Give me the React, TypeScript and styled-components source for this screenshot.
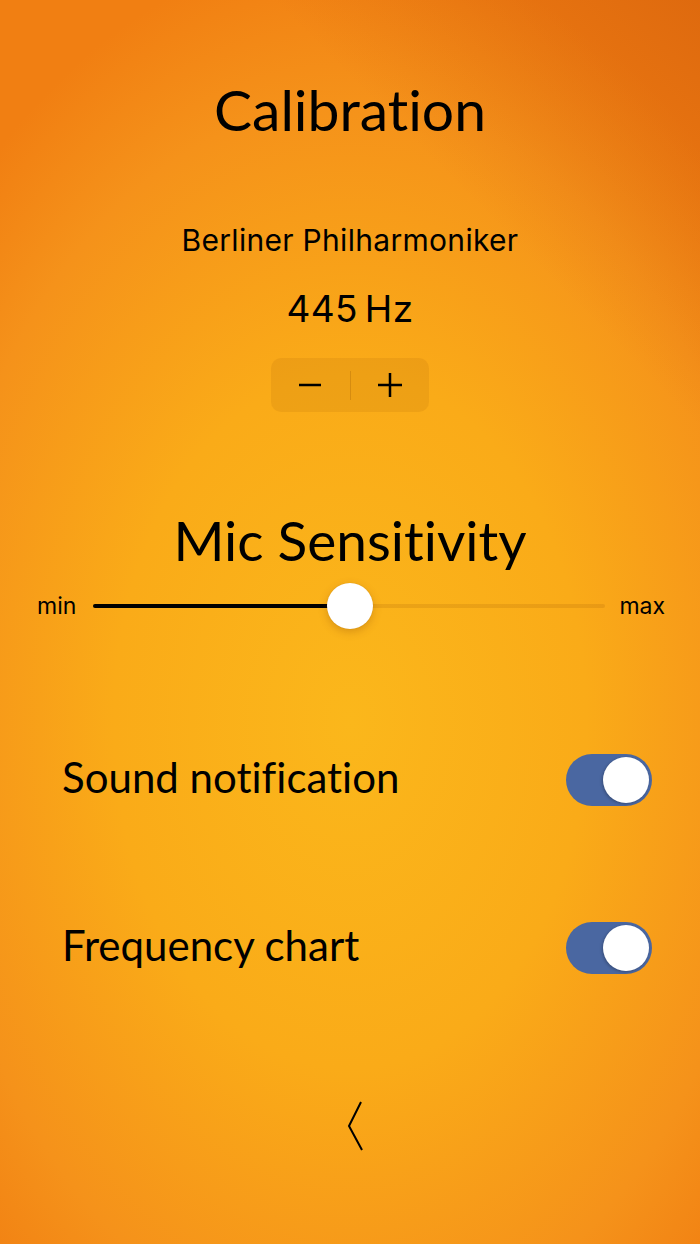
import React, { useState } from "react";
import styled, { createGlobalStyle } from "styled-components";

const GlobalStyle = createGlobalStyle`
    html, body {
        margin: 0;
        padding: 0;
    }
    body {
        font-family: "Lato", "Noto Sans", sans-serif;
        font-variant-ligatures: none;
        color: #000;
    }
`;

const Page = styled.div`
    min-height: 100vh;
    display: flex;
    flex-direction: column;
    align-items: center;
    background:
        linear-gradient(225deg, rgba(200, 80, 10, 0.45) 0%, rgba(200, 80, 10, 0) 22%),
        radial-gradient(ellipse 75% 62% at 50% 58%, #fbb71b 0%, #faab18 45%, #f5921a 80%, #f17f12 100%);
`;

const Title = styled.h1<{ $top: number; $size: number }>`
    margin: ${(p) => p.$top}px 0 0;
    font-family: "Lato", sans-serif;
    font-weight: 400;
    font-size: ${(p) => p.$size}px;
    line-height: 64px;
`;

const Preset = styled.div`
    margin-top: 82px;
    font-family: "Inter", "Noto Sans", sans-serif;
    font-size: 30px;
    line-height: 34px;
    letter-spacing: 0.3px;
`;

const Freq = styled.div`
    margin-top: 31px;
    font-family: "Inter", "Noto Sans", sans-serif;
    font-size: 37px;
    line-height: 42px;
    letter-spacing: 0.3px;
`;

const Stepper = styled.div`
    margin-top: 28px;
    width: 158px;
    height: 54px;
    border-radius: 10px;
    background: rgba(140, 70, 0, 0.1);
    display: flex;
    align-items: center;
`;

const StepButton = styled.button`
    flex: 1;
    height: 100%;
    border: 0;
    background: transparent;
    display: flex;
    align-items: center;
    justify-content: center;
    padding: 0;
    cursor: pointer;
`;

const StepDivider = styled.div`
    width: 1px;
    height: 29px;
    background: rgba(120, 60, 0, 0.2);
`;

const SliderRow = styled.div`
    margin-top: 11px;
    align-self: stretch;
    display: flex;
    align-items: center;
    padding: 0 35px 0 37px;
    height: 46px;
`;

const SliderLabel = styled.span`
    font-family: "Inter", "Noto Sans", sans-serif;
    font-size: 23px;
    line-height: 28px;
`;

const Track = styled.div`
    position: relative;
    flex: 1;
    height: 4px;
    margin: 0 14px 0 17px;
    border-radius: 2px;
    background: rgba(140, 70, 0, 0.14);
`;

const TrackFill = styled.div`
    height: 100%;
    border-radius: 2px;
    background: #000;
`;

const Thumb = styled.div`
    position: absolute;
    top: 50%;
    width: 46px;
    height: 46px;
    margin: -23px 0 0 -23px;
    border-radius: 50%;
    background: #fff;
    box-shadow: 0 3px 8px rgba(120, 50, 0, 0.25), 0 0 1px rgba(0, 0, 0, 0.15);
`;

const SwitchRow = styled.div<{ $top: number }>`
    margin-top: ${(p) => p.$top}px;
    align-self: stretch;
    display: flex;
    align-items: center;
    justify-content: space-between;
    padding: 0 48px 0 62px;
`;

const SwitchLabel = styled.span`
    font-family: "Lato", sans-serif;
    font-size: 42px;
    line-height: 52px;
    margin-bottom: 6px;
`;

const Switch = styled.button<{ $on: boolean }>`
    width: 86px;
    height: 52px;
    border: 0;
    padding: 3px;
    border-radius: 26px;
    background: ${(p) => (p.$on ? "#4a67a1" : "rgba(140, 70, 0, 0.15)")};
    display: flex;
    justify-content: ${(p) => (p.$on ? "flex-end" : "flex-start")};
    cursor: pointer;
`;

const Knob = styled.span`
    width: 46px;
    height: 46px;
    border-radius: 50%;
    background: #fff;
    box-shadow: -1px 1px 3px rgba(0, 0, 0, 0.25);
`;

const BackButton = styled.button`
    margin: 124px 0 0 10px;
    border: 0;
    background: transparent;
    padding: 0;
    width: 16px;
    height: 50px;
    cursor: pointer;
`;

export default function App() {
    const [hz, setHz] = useState(445);
    const [sensitivity] = useState(0.502);
    const [sound, setSound] = useState(true);
    const [chart, setChart] = useState(true);

    return (
        <>
            <GlobalStyle />
            <Page>
                <Title $top={77} $size={57}>Calibration</Title>
                <Preset>Berliner Philharmoniker</Preset>
                <Freq>{hz}&thinsp;Hz</Freq>
                <Stepper>
                    <StepButton onClick={() => setHz(hz - 1)} aria-label="decrease">
                        <svg width="24" height="24" viewBox="0 0 24 24">
                            <path d="M1 12h22" stroke="#000" strokeWidth="2.5" />
                        </svg>
                    </StepButton>
                    <StepDivider />
                    <StepButton onClick={() => setHz(hz + 1)} aria-label="increase">
                        <svg width="24" height="24" viewBox="0 0 24 24">
                            <path d="M0 12h24M12 0v24" stroke="#000" strokeWidth="2.5" />
                        </svg>
                    </StepButton>
                </Stepper>

                <Title $top={96} $size={55}>Mic Sensitivity</Title>
                <SliderRow>
                    <SliderLabel>min</SliderLabel>
                    <Track>
                        <TrackFill style={{ width: `${sensitivity * 100}%` }} />
                        <Thumb style={{ left: `${sensitivity * 100}%` }} />
                    </Track>
                    <SliderLabel>max</SliderLabel>
                </SliderRow>

                <SwitchRow $top={122}>
                    <SwitchLabel>Sound notification</SwitchLabel>
                    <Switch $on={sound} onClick={() => setSound(!sound)}>
                        <Knob />
                    </Switch>
                </SwitchRow>
                <SwitchRow $top={110}>
                    <SwitchLabel>Frequency chart</SwitchLabel>
                    <Switch $on={chart} onClick={() => setChart(!chart)}>
                        <Knob />
                    </Switch>
                </SwitchRow>

                <BackButton aria-label="back">
                    <svg width="16" height="50" viewBox="0 0 16 50">
                        <polyline points="14,1 2,25 15,49" fill="none" stroke="#000" strokeWidth="2" />
                    </svg>
                </BackButton>
            </Page>
        </>
    );
}
